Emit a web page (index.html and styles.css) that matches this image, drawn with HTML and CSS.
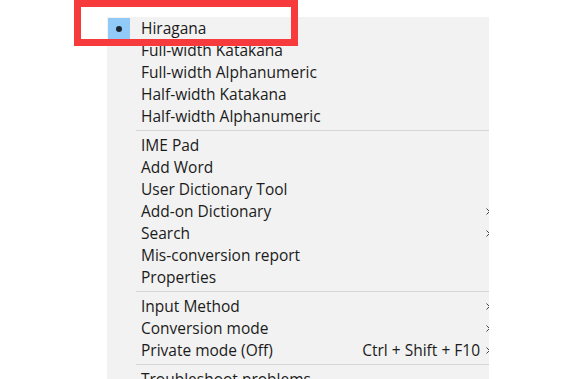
FILE: index.html
```html
<!DOCTYPE html>
<html lang="en">
<head>
    <meta charset="UTF-8">
    <title>IME menu</title>
    <link rel="stylesheet" href="styles.css">
</head>
<body>

<div class="menu">
    <div class="item checked">
        <span class="check"><span class="dot"></span></span>
        <span class="label">Hiragana</span>
    </div>
    <div class="item"><span class="check"></span><span class="label">Full-width Katakana</span></div>
    <div class="item"><span class="check"></span><span class="label">Full-width Alphanumeric</span></div>
    <div class="item"><span class="check"></span><span class="label">Half-width Katakana</span></div>
    <div class="item"><span class="check"></span><span class="label">Half-width Alphanumeric</span></div>

    <div class="sep"></div>

    <div class="item"><span class="check"></span><span class="label">IME Pad</span></div>
    <div class="item"><span class="check"></span><span class="label">Add Word</span></div>
    <div class="item"><span class="check"></span><span class="label">User Dictionary Tool</span></div>
    <div class="item"><span class="check"></span><span class="label">Add-on Dictionary</span><svg class="arrow" width="4" height="7" viewBox="0 0 4 7"><path d="M0.5 0.5 L3.5 3.5 L0.5 6.5" fill="none" stroke="#444" stroke-width="1"/></svg></div>
    <div class="item"><span class="check"></span><span class="label">Search</span><svg class="arrow" width="4" height="7" viewBox="0 0 4 7"><path d="M0.5 0.5 L3.5 3.5 L0.5 6.5" fill="none" stroke="#444" stroke-width="1"/></svg></div>
    <div class="item"><span class="check"></span><span class="label">Mis-conversion report</span></div>
    <div class="item"><span class="check"></span><span class="label">Properties</span></div>

    <div class="sep"></div>

    <div class="item"><span class="check"></span><span class="label">Input Method</span><svg class="arrow" width="4" height="7" viewBox="0 0 4 7"><path d="M0.5 0.5 L3.5 3.5 L0.5 6.5" fill="none" stroke="#444" stroke-width="1"/></svg></div>
    <div class="item"><span class="check"></span><span class="label">Conversion mode</span><svg class="arrow" width="4" height="7" viewBox="0 0 4 7"><path d="M0.5 0.5 L3.5 3.5 L0.5 6.5" fill="none" stroke="#444" stroke-width="1"/></svg></div>
    <div class="item"><span class="check"></span><span class="label">Private mode (Off)</span><span class="shortcut">Ctrl + Shift + F10</span><svg class="arrow" width="4" height="7" viewBox="0 0 4 7"><path d="M0.5 0.5 L3.5 3.5 L0.5 6.5" fill="none" stroke="#444" stroke-width="1"/></svg></div>

    <div class="sep"></div>

    <div class="item"><span class="check"></span><span class="label">Troubleshoot problems</span></div>
</div>

<div class="highlight-box"></div>

</body>
</html>
```

FILE: styles.css
```css
body {
    margin: 0;
    background: #ffffff;
    font-family: "Open Sans", "Noto Sans", sans-serif;
    color: #1b1b1b;
    overflow: hidden;
}
.menu {
    width: 381px;
    margin-left: 107px;
    margin-top: 17px;
    padding: 0 0 0 1px;
    background: #f2f2f2;
    overflow: hidden;
    height: 400px;
}
.item {
    display: flex;
    align-items: center;
    height: 22px;
    font-size: 15.5px;
    white-space: nowrap;
}
.check {
    width: 22px;
    height: 21px;
    margin-right: 11px;
    margin-top: 1px;
    display: flex;
    align-items: center;
    justify-content: center;
    flex: none;
}
.checked .check {
    background: #91c9f7;
}
.dot {
    width: 6px;
    height: 6px;
    border-radius: 50%;
    background: #1c2630;
}
.label {
    flex: 1;
}
.shortcut {
    margin-right: 6px;
}
.arrow {
    flex: none;
    margin-right: -1px;
}
.sep {
    height: 1px;
    background: #d6d6d6;
    margin: 3px 0 3px 28px;
}
.highlight-box {
    position: absolute;
    left: 74px;
    top: -1px;
    width: 210px;
    height: 32px;
    border: 7px solid #f73a3c;
    border-top-width: 8px;
}
```
